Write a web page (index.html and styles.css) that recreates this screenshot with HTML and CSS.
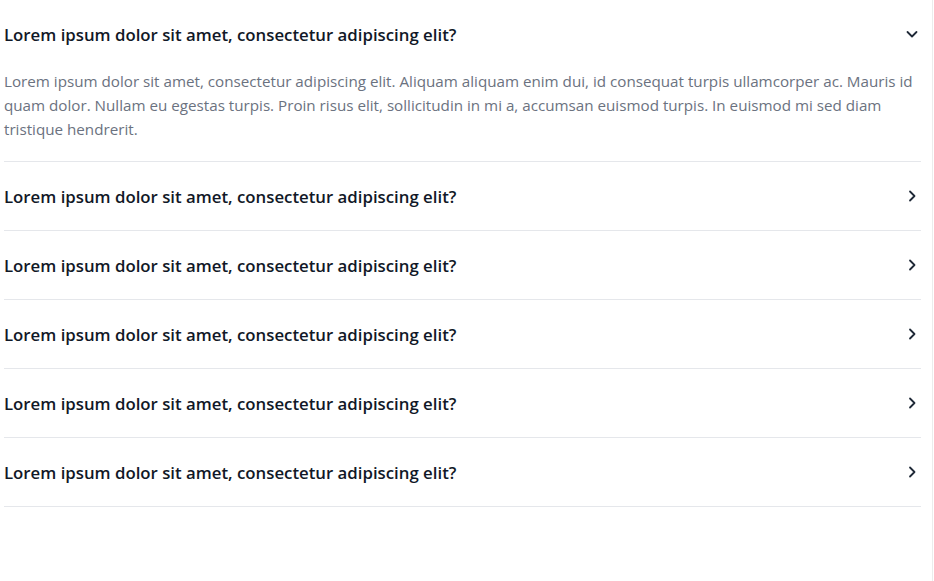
FILE: index.html
```html
<!DOCTYPE html>
<html lang="en">
<head>
<meta charset="utf-8">
<title>FAQ</title>
<link rel="stylesheet" href="styles.css">
</head>
<body>
<div class="page">
  <div class="faq">
    <div class="item open">
      <div class="head">
        <span class="q">Lorem ipsum dolor sit amet, consectetur adipiscing elit?</span>
        <svg class="chev" width="12" height="12" viewBox="0 0 12 12"><path d="M1.5 4 L6 8.5 L10.5 4" fill="none" stroke="#1f2937" stroke-width="1.8" stroke-linecap="round" stroke-linejoin="round"/></svg>
      </div>
      <p class="answer">Lorem ipsum dolor sit amet, consectetur adipiscing elit. Aliquam aliquam enim dui, id consequat turpis ullamcorper ac. Mauris id quam dolor. Nullam eu egestas turpis. Proin risus elit, sollicitudin in mi a, accumsan euismod turpis. In euismod mi sed diam tristique hendrerit.</p>
    </div>
    <div class="item">
      <div class="head">
        <span class="q">Lorem ipsum dolor sit amet, consectetur adipiscing elit?</span>
        <svg class="chev" width="12" height="12" viewBox="0 0 12 12"><path d="M4 1.5 L8.5 6 L4 10.5" fill="none" stroke="#1f2937" stroke-width="1.8" stroke-linecap="round" stroke-linejoin="round"/></svg>
      </div>
    </div>
    <div class="item">
      <div class="head">
        <span class="q">Lorem ipsum dolor sit amet, consectetur adipiscing elit?</span>
        <svg class="chev" width="12" height="12" viewBox="0 0 12 12"><path d="M4 1.5 L8.5 6 L4 10.5" fill="none" stroke="#1f2937" stroke-width="1.8" stroke-linecap="round" stroke-linejoin="round"/></svg>
      </div>
    </div>
    <div class="item">
      <div class="head">
        <span class="q">Lorem ipsum dolor sit amet, consectetur adipiscing elit?</span>
        <svg class="chev" width="12" height="12" viewBox="0 0 12 12"><path d="M4 1.5 L8.5 6 L4 10.5" fill="none" stroke="#1f2937" stroke-width="1.8" stroke-linecap="round" stroke-linejoin="round"/></svg>
      </div>
    </div>
    <div class="item">
      <div class="head">
        <span class="q">Lorem ipsum dolor sit amet, consectetur adipiscing elit?</span>
        <svg class="chev" width="12" height="12" viewBox="0 0 12 12"><path d="M4 1.5 L8.5 6 L4 10.5" fill="none" stroke="#1f2937" stroke-width="1.8" stroke-linecap="round" stroke-linejoin="round"/></svg>
      </div>
    </div>
    <div class="item">
      <div class="head">
        <span class="q">Lorem ipsum dolor sit amet, consectetur adipiscing elit?</span>
        <svg class="chev" width="12" height="12" viewBox="0 0 12 12"><path d="M4 1.5 L8.5 6 L4 10.5" fill="none" stroke="#1f2937" stroke-width="1.8" stroke-linecap="round" stroke-linejoin="round"/></svg>
      </div>
    </div>
  </div>
</div>
</body>
</html>
```
FILE: styles.css
```css
html, body {
  margin: 0;
  padding: 0;
  background: #ffffff;
}
body {
  font-family: "Open Sans", "Noto Sans", sans-serif;
}
.page {
  width: 933px;
  height: 581px;
  box-sizing: border-box;
  border-right: 1px solid #ececec;
  padding-left: 4px;
}
.faq {
  width: 917px;
}
.item {
  border-bottom: 1px solid #e5e7eb;
}
.head {
  height: 68px;
  display: flex;
  align-items: center;
  justify-content: space-between;
}
.q {
  font-size: 16.8px;
  font-weight: 600;
  color: #111827;
}
.chev {
  margin-right: 3px;
  flex: none;
}
.answer {
  margin: 1px 0 0;
  padding-bottom: 20px;
  font-size: 15.2px;
  line-height: 24px;
  color: #6b7280;
}
```
